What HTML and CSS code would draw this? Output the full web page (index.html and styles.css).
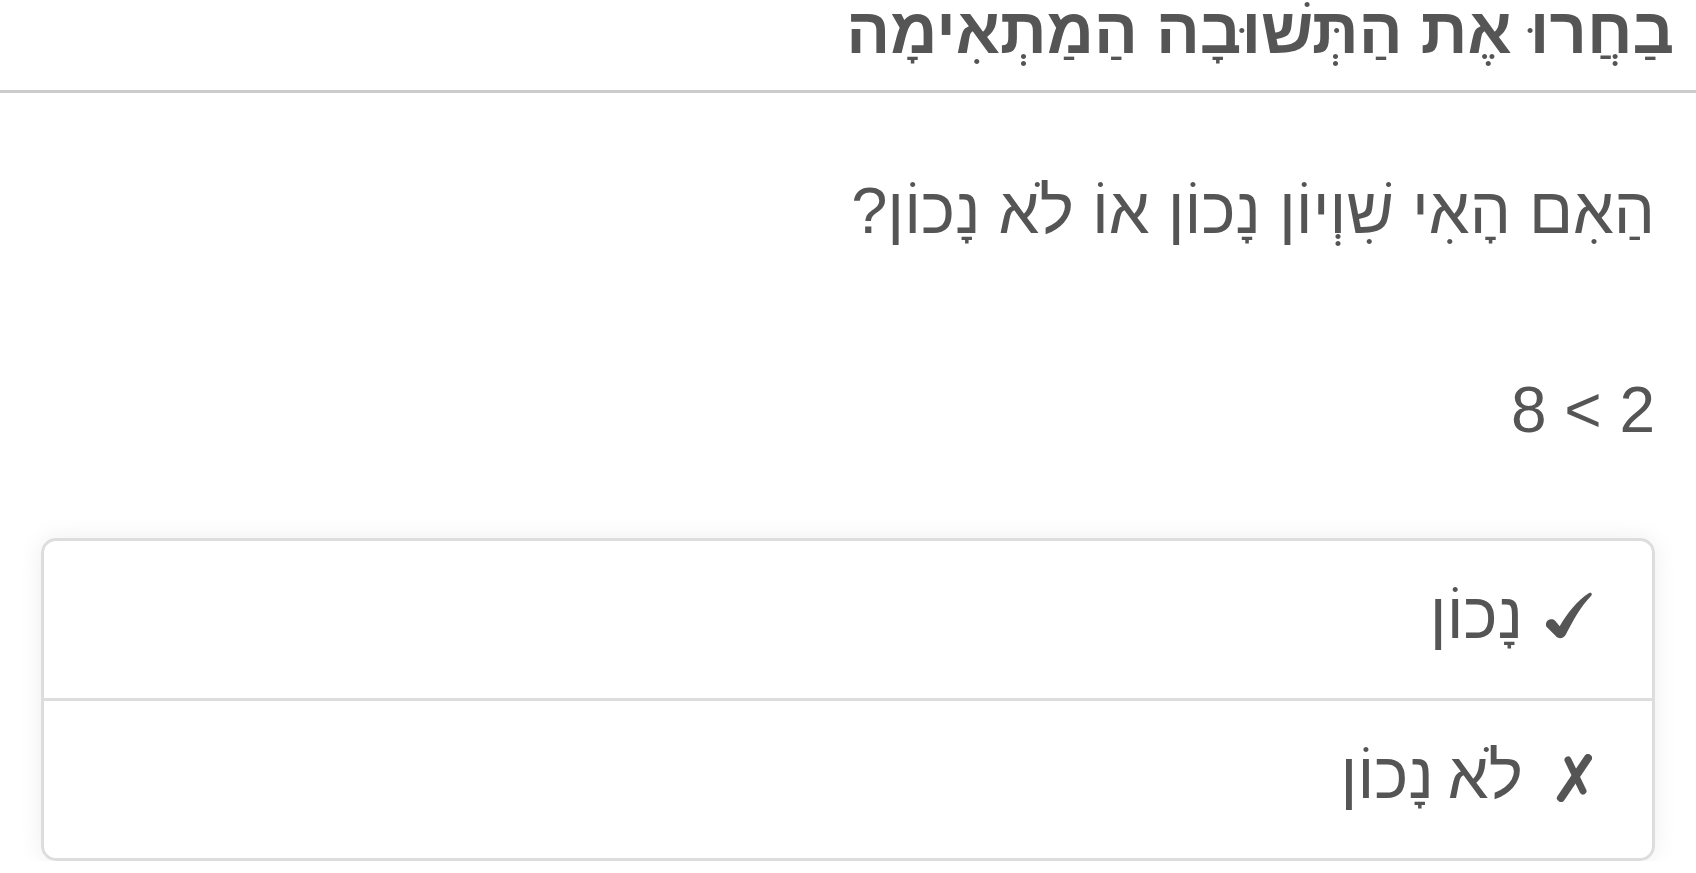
FILE: index.html
```html
<!DOCTYPE html>
<html lang="he" dir="rtl">
<head>
    <meta charset="UTF-8">
    <title>שאלה</title>
    <link rel="stylesheet" href="styles.css">
</head>
<body>
<div class="quiz-header">
    <h1 class="quiz-title">בַחֲרוּ אֶת הַתְּשׁוּבָה הַמַתְאִימָה</h1>
</div>
<div class="quiz-body">
    <p class="quiz-question">הַאִם הָאִי שִׁוְיוֹן נָכוֹן אוֹ לֹא נָכוֹן?</p>
    <p class="quiz-expr">2 &gt; 8</p>
    <ul class="quiz-options">
        <li class="quiz-option">
            <span class="mark mark-yes">
                <svg width="47" height="47" viewBox="0 0 48 48">
                    <path d="M1 33 C1 28 8 26 11 30 L15 35 C23 21 33 9 45 1 C47 0 49 2 47 4 C37 14 28 30 21 44 C19 48 13 48 11 45 L2 36 C1 35 1 34 1 33 Z" fill="#555555"/>
                </svg>
            </span>
            <span class="answer">נָכוֹן</span>
        </li>
        <li class="quiz-option">
            <span class="mark mark-no">
                <svg width="36" height="48" viewBox="0 0 36 48">
                    <path d="M5 44 L32 4" stroke="#555555" stroke-width="8" stroke-linecap="round" fill="none"/>
                    <path d="M12 6 L27 37" stroke="#555555" stroke-width="7" stroke-linecap="round" fill="none"/>
                </svg>
            </span>
            <span class="answer">לֹא נָכוֹן</span>
        </li>
    </ul>
</div>
</body>
</html>
```

FILE: styles.css
```css
html, body {
    margin: 0px;
    padding: 0px;
    background: #ffffff;
}
body {
    font-family: "Liberation Sans", "DejaVu Sans", sans-serif;
    color: #555555;
}
h1, p, ul, li {
    margin: 0px;
    padding: 0px;
}
.quiz-header {
    height: 90px;
    padding: 0px 22px;
    border-bottom: 3px solid #cccccc;
}
.quiz-title {
    font-size: 65px;
    line-height: 62px;
    font-weight: bold;
    color: #555555;
}
.quiz-body {
    padding: 0px 41px;
}
.quiz-question {
    margin-top: 78px;
    font-size: 65px;
    line-height: 80px;
}
.quiz-expr {
    margin-top: 119px;
    font-size: 64px;
    line-height: 80px;
}
.quiz-options {
    list-style: none;
    margin-top: 88px;
    border: 3px solid #dddddd;
    border-radius: 15px;
    box-shadow: 0px 0px 25px rgba(0, 0, 0, 0.07);
}
.quiz-option {
    height: 157px;
    display: flex;
    align-items: center;
    padding: 0px 60px;
    font-size: 65px;
    line-height: 80px;
}
.quiz-option + .quiz-option {
    border-top: 3px solid #dddddd;
}
.answer {
    margin-bottom: 7px;
    word-spacing: -4px;
}
.mark {
    width: 48px;
    margin-left: 21px;
    display: flex;
}
.mark svg {
    display: block;
}
.mark-yes {
    margin-bottom: 9px;
}
.mark-no {
    margin-bottom: 4px;
}
```
